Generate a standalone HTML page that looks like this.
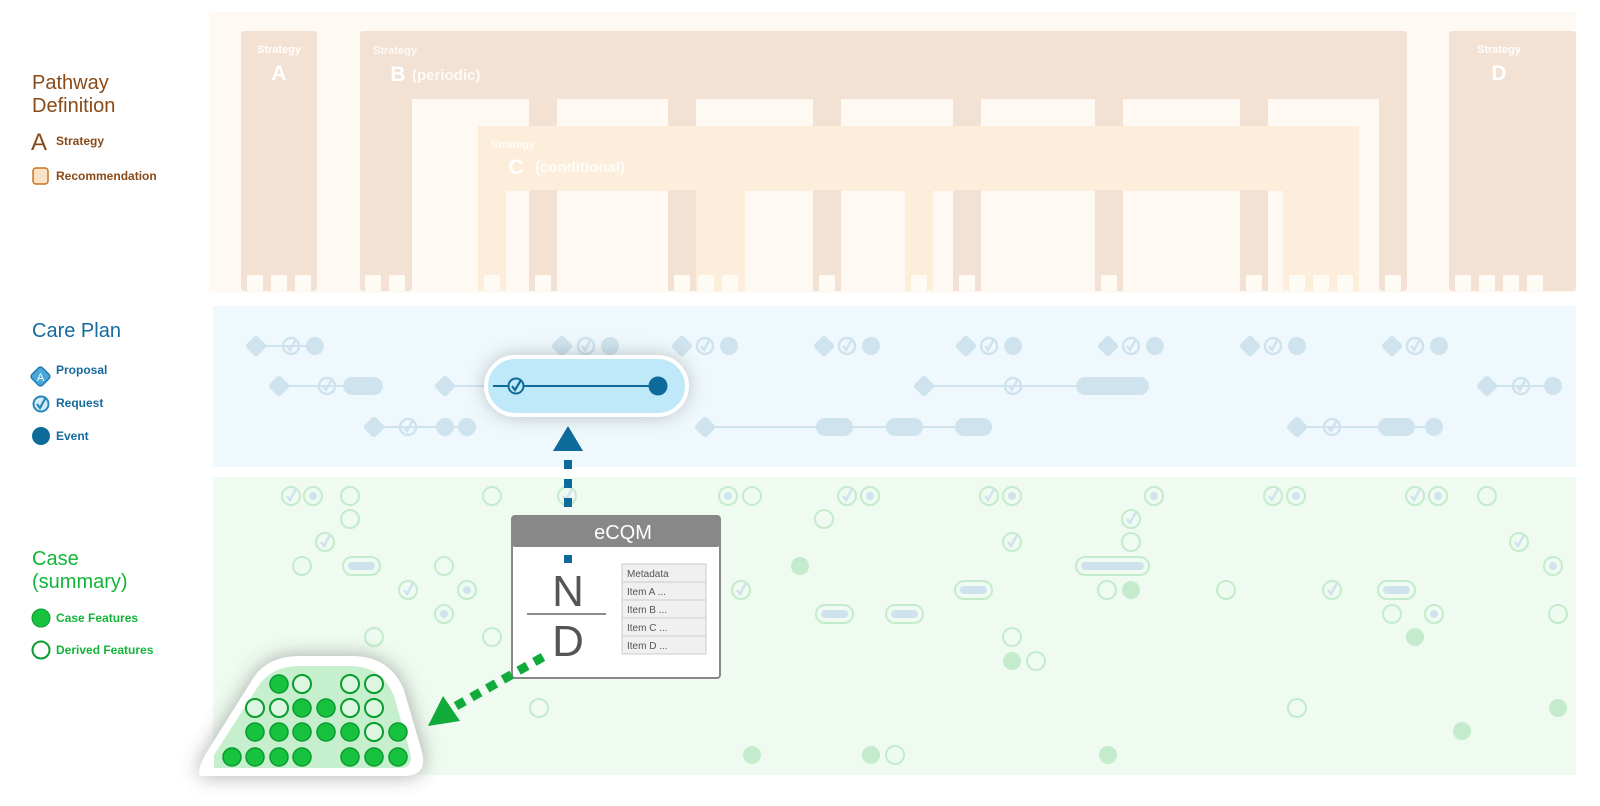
<!DOCTYPE html>
<html><head><meta charset="utf-8"><style>
html,body{margin:0;padding:0;background:#fff;}
svg{display:block;font-family:"Liberation Sans",sans-serif;}
</style></head><body>
<svg width="1600" height="806" viewBox="0 0 1600 806" xmlns="http://www.w3.org/2000/svg">
<defs>
<filter id="sh" x="-30%" y="-60%" width="160%" height="220%"><feGaussianBlur stdDeviation="10"/></filter>
<g id="dia"><rect x="-8" y="-8" width="16" height="16" rx="3" transform="rotate(45)" fill="#cfe3ee"/></g>
<g id="chk"><circle r="8" fill="none" stroke="#cfe3ee" stroke-width="2.5"/><path d="M-4 0 L-1 4 L5 -7" fill="none" stroke="#cfe3ee" stroke-width="2.5"/></g>
<g id="dot"><circle r="9" fill="#cfe3ee"/></g>
<g id="go"><circle r="9" fill="none" stroke="#c4ebcc" stroke-width="2"/></g>
<g id="gf"><circle r="9" fill="#c4ebcc"/></g>
<g id="gd"><circle r="9" fill="none" stroke="#c4ebcc" stroke-width="2"/><circle r="4" fill="#cfe3ee"/></g>
<g id="gc"><circle r="9" fill="none" stroke="#c4ebcc" stroke-width="2"/><path d="M-4 0 L-1 4 L5 -7" fill="none" stroke="#cfe3ee" stroke-width="2.5"/></g>
<g id="wb"><rect x="-8" y="-8" width="16" height="16" rx="2" fill="#fefaf4"/></g>
<g id="F"><circle r="9" fill="#17c23f" stroke="#0b9b2f" stroke-width="1.5"/></g>
<g id="O"><circle r="9" fill="#dcf6e1" stroke="#0b9b2f" stroke-width="2"/></g>
</defs>

<!-- Legend -->
<g fill="#8a4a17">
<text x="32" y="89" font-size="20">Pathway</text>
<text x="32" y="112" font-size="20">Definition</text>
<text x="31" y="150" font-size="24">A</text>
<text x="56" y="145" font-size="12" font-weight="bold">Strategy</text>
<rect x="33" y="168" width="15" height="16" rx="3" fill="#fde2c4" stroke="#c8742a" stroke-width="1.5"/>
<text x="56" y="180" font-size="12" font-weight="bold">Recommendation</text>
</g>
<g fill="#146b9c">
<text x="32" y="337" font-size="20">Care Plan</text>
<rect x="33" y="369" width="15" height="15" rx="3" transform="rotate(45 40.5 376.5)" fill="#4aa7d6" stroke="#1f7bb0" stroke-width="1.5"/>
<text x="40.5" y="381" font-size="11" fill="#fff" text-anchor="middle">A</text>
<text x="56" y="374" font-size="12" font-weight="bold">Proposal</text>
<circle cx="41" cy="404" r="7.5" fill="#d4ecf7" stroke="#2a87bb" stroke-width="2"/><path d="M37 404 L40 408 L46 397" fill="none" stroke="#2a87bb" stroke-width="2.2"/>
<text x="56" y="407" font-size="12" font-weight="bold">Request</text>
<circle cx="41" cy="436" r="9" fill="#0e6a9a"/>
<text x="56" y="440" font-size="12" font-weight="bold">Event</text>
</g>
<g fill="#12b53a">
<text x="32" y="565" font-size="20">Case</text>
<text x="32" y="588" font-size="20">(summary)</text>
<circle cx="41" cy="618" r="9" fill="#17c23f" stroke="#0b9b2f"/>
<text x="56" y="622" font-size="12" font-weight="bold">Case Features</text>
<circle cx="41" cy="650" r="8.5" fill="#fff" stroke="#0b9b2f" stroke-width="2"/>
<text x="56" y="654" font-size="12" font-weight="bold">Derived Features</text>
</g>

<!-- Pathway band -->
<rect x="209" y="12" width="1367" height="281" fill="#fefaf3"/>
<g fill="#f3e1d4">
<rect x="241" y="31" width="76" height="260" rx="3"/>
<rect x="360" y="31" width="1047" height="68" rx="3"/>
<rect x="360" y="31" width="52" height="260" rx="3"/>
<rect x="529" y="90" width="28" height="201" rx="3"/>
<rect x="668" y="90" width="28" height="201" rx="3"/>
<rect x="813" y="90" width="28" height="201" rx="3"/>
<rect x="953" y="90" width="28" height="201" rx="3"/>
<rect x="1095" y="90" width="28" height="201" rx="3"/>
<rect x="1240" y="90" width="28" height="201" rx="3"/>
<rect x="1379" y="90" width="28" height="201" rx="3"/>
<rect x="1449" y="31" width="127" height="260" rx="3"/>
</g>
<g fill="#fdeedb">
<rect x="478" y="126" width="881" height="65"/>
<rect x="478" y="126" width="28" height="165"/>
<rect x="696" y="126" width="49" height="165"/>
<rect x="905" y="126" width="28" height="165"/>
<rect x="1283" y="126" width="76" height="165"/>
</g>
<g fill="#f3e1d4">
<rect x="529" y="190" width="28" height="101"/><rect x="668" y="190" width="28" height="101"/><rect x="813" y="190" width="28" height="101"/><rect x="953" y="190" width="28" height="101"/><rect x="1095" y="190" width="28" height="101"/><rect x="1240" y="190" width="28" height="101"/>
</g>
<g fill="#fff" text-anchor="middle" font-weight="bold">
<text x="279" y="53" font-size="11">Strategy</text><text x="279" y="80" font-size="21">A</text>
<text x="1499" y="53" font-size="11">Strategy</text><text x="1499" y="80" font-size="21">D</text>
<text x="398" y="81" font-size="21">B</text>
<text x="516" y="174" font-size="21">C</text>
</g>
<g fill="#fff" opacity="0.85" font-weight="bold">
<text x="373" y="54" font-size="11">Strategy</text><text x="412" y="80" font-size="15">(periodic)</text>
<text x="491" y="148" font-size="11">Strategy</text><text x="535" y="172" font-size="15">(conditional)</text>
</g>
<g>
<use href="#wb" x="255" y="283"/><use href="#wb" x="279" y="283"/><use href="#wb" x="303" y="283"/>
<use href="#wb" x="373" y="283"/><use href="#wb" x="397" y="283"/>
<use href="#wb" x="492" y="283"/><use href="#wb" x="543" y="283"/>
<use href="#wb" x="682" y="283"/><use href="#wb" x="706" y="283"/><use href="#wb" x="730" y="283"/>
<use href="#wb" x="827" y="283"/><use href="#wb" x="919" y="283"/><use href="#wb" x="967" y="283"/>
<use href="#wb" x="1109" y="283"/><use href="#wb" x="1254" y="283"/>
<use href="#wb" x="1297" y="283"/><use href="#wb" x="1321" y="283"/><use href="#wb" x="1345" y="283"/>
<use href="#wb" x="1393" y="283"/>
<use href="#wb" x="1463" y="283"/><use href="#wb" x="1487" y="283"/><use href="#wb" x="1511" y="283"/><use href="#wb" x="1535" y="283"/>
</g>

<!-- Care plan band -->
<rect x="213" y="306" width="1363" height="161" fill="#eff9fd"/>
<g stroke="#cfe3ee" stroke-width="2">
<line x1="280" y1="386" x2="350" y2="386"/><line x1="445" y1="386" x2="500" y2="386"/>
<line x1="924" y1="386" x2="1100" y2="386"/><line x1="1487" y1="386" x2="1553" y2="386"/>
<line x1="374" y1="427" x2="467" y2="427"/><line x1="705" y1="427" x2="975" y2="427"/><line x1="1297" y1="427" x2="1432" y2="427"/>
<line x1="256" y1="346" x2="315" y2="346"/>
</g>
<g>
<use href="#dia" x="256" y="346"/><use href="#chk" x="291" y="346"/><use href="#dot" x="315" y="346"/>
<use href="#dia" x="562" y="346"/><use href="#chk" x="586" y="346"/><use href="#dot" x="610" y="346"/>
<use href="#dia" x="682" y="346"/><use href="#chk" x="705" y="346"/><use href="#dot" x="729" y="346"/>
<use href="#dia" x="824" y="346"/><use href="#chk" x="847" y="346"/><use href="#dot" x="871" y="346"/>
<use href="#dia" x="966" y="346"/><use href="#chk" x="989" y="346"/><use href="#dot" x="1013" y="346"/>
<use href="#dia" x="1108" y="346"/><use href="#chk" x="1131" y="346"/><use href="#dot" x="1155" y="346"/>
<use href="#dia" x="1250" y="346"/><use href="#chk" x="1273" y="346"/><use href="#dot" x="1297" y="346"/>
<use href="#dia" x="1392" y="346"/><use href="#chk" x="1415" y="346"/><use href="#dot" x="1439" y="346"/>
<use href="#dia" x="279" y="386"/><use href="#chk" x="327" y="386"/><rect x="343" y="377" width="40" height="18" rx="9" fill="#cfe3ee"/>
<use href="#dia" x="445" y="386"/>
<use href="#dia" x="924" y="386"/><use href="#chk" x="1013" y="386"/><rect x="1076" y="377" width="73" height="18" rx="9" fill="#cfe3ee"/>
<use href="#dia" x="1487" y="386"/><use href="#chk" x="1521" y="386"/><use href="#dot" x="1553" y="386"/>
<use href="#dia" x="374" y="427"/><use href="#chk" x="408" y="427"/><use href="#dot" x="445" y="427"/><use href="#dot" x="467" y="427"/>
<use href="#dia" x="705" y="427"/><rect x="816" y="418" width="37" height="18" rx="9" fill="#cfe3ee"/><rect x="886" y="418" width="37" height="18" rx="9" fill="#cfe3ee"/><rect x="955" y="418" width="37" height="18" rx="9" fill="#cfe3ee"/>
<use href="#dia" x="1297" y="427"/><use href="#chk" x="1332" y="427"/><rect x="1378" y="418" width="37" height="18" rx="9" fill="#cfe3ee"/><use href="#dot" x="1434" y="427"/>
</g>

<!-- Case band -->
<rect x="213" y="477" width="1363" height="298" fill="#effbf1"/>
<g>
<use href="#gc" x="291" y="496"/><use href="#gd" x="313" y="496"/><use href="#go" x="350" y="496"/><use href="#go" x="492" y="496"/><use href="#gc" x="567" y="496"/><use href="#gd" x="728" y="496"/><use href="#go" x="752" y="496"/><use href="#gc" x="847" y="496"/><use href="#gd" x="870" y="496"/><use href="#gc" x="989" y="496"/><use href="#gd" x="1012" y="496"/><use href="#gd" x="1154" y="496"/><use href="#gc" x="1273" y="496"/><use href="#gd" x="1296" y="496"/><use href="#gc" x="1415" y="496"/><use href="#gd" x="1438" y="496"/><use href="#go" x="1487" y="496"/>
<use href="#go" x="350" y="519"/><use href="#go" x="824" y="519"/><use href="#gc" x="1131" y="519"/>
<use href="#gc" x="325" y="542"/><use href="#gc" x="1012" y="542"/><use href="#go" x="1131" y="542"/><use href="#gc" x="1519" y="542"/>
<use href="#go" x="302" y="566"/><rect x="343" y="557" width="37" height="18" rx="9" fill="none" stroke="#c4ebcc" stroke-width="2"/><rect x="348" y="562" width="27" height="8" rx="4" fill="#cfe3ee"/><use href="#go" x="444" y="566"/><use href="#gf" x="800" y="566"/><rect x="1076" y="557" width="73" height="18" rx="9" fill="none" stroke="#c4ebcc" stroke-width="2"/><rect x="1081" y="562" width="63" height="8" rx="4" fill="#cfe3ee"/><use href="#gd" x="1553" y="566"/>
<use href="#gc" x="408" y="590"/><use href="#gd" x="467" y="590"/><use href="#gc" x="741" y="590"/><rect x="955" y="581" width="37" height="18" rx="9" fill="none" stroke="#c4ebcc" stroke-width="2"/><rect x="960" y="586" width="27" height="8" rx="4" fill="#cfe3ee"/><use href="#go" x="1107" y="590"/><use href="#gf" x="1131" y="590"/><use href="#go" x="1226" y="590"/><use href="#gc" x="1332" y="590"/><rect x="1378" y="581" width="37" height="18" rx="9" fill="none" stroke="#c4ebcc" stroke-width="2"/><rect x="1383" y="586" width="27" height="8" rx="4" fill="#cfe3ee"/>
<use href="#gd" x="444" y="614"/><rect x="816" y="605" width="37" height="18" rx="9" fill="none" stroke="#c4ebcc" stroke-width="2"/><rect x="821" y="610" width="27" height="8" rx="4" fill="#cfe3ee"/><rect x="886" y="605" width="37" height="18" rx="9" fill="none" stroke="#c4ebcc" stroke-width="2"/><rect x="891" y="610" width="27" height="8" rx="4" fill="#cfe3ee"/><use href="#go" x="1392" y="614"/><use href="#gd" x="1434" y="614"/><use href="#go" x="1558" y="614"/>
<use href="#go" x="374" y="637"/><use href="#go" x="492" y="637"/><use href="#go" x="1012" y="637"/><use href="#gf" x="1415" y="637"/>
<use href="#gf" x="1012" y="661"/><use href="#go" x="1036" y="661"/>
<use href="#go" x="539" y="708"/><use href="#go" x="1297" y="708"/><use href="#gf" x="1558" y="708"/>
<use href="#gf" x="1462" y="731"/>
<use href="#gf" x="752" y="755"/><use href="#gf" x="871" y="755"/><use href="#go" x="895" y="755"/><use href="#gf" x="1108" y="755"/>
</g>

<!-- Highlight care plan pill -->
<rect x="486" y="357" width="201" height="58" rx="29" fill="#333" opacity="0.35" filter="url(#sh)"/>
<rect x="486" y="357" width="201" height="58" rx="29" fill="#bfe9f8" stroke="#fff" stroke-width="4"/>
<line x1="493" y1="386" x2="658" y2="386" stroke="#0e6a9a" stroke-width="2"/>
<circle cx="516" cy="386" r="7.5" fill="#bfe9f8" stroke="#0e6a9a" stroke-width="2"/><path d="M512 386 L515 390 L521 380" fill="none" stroke="#0e6a9a" stroke-width="2.2"/>
<circle cx="658" cy="386" r="9.5" fill="#0e6a9a"/>

<!-- Blue arrow -->
<polygon points="568,426 553,451 583,451" fill="#0e6a9a"/>
<line x1="568" y1="460" x2="568" y2="560" stroke="#0e6a9a" stroke-width="8" stroke-dasharray="9,10"/>

<!-- eCQM -->
<rect x="512" y="516" width="208" height="162" rx="3" fill="#fff" stroke="#888" stroke-width="2"/>
<rect x="512" y="516" width="208" height="31" rx="3" fill="#888"/>
<text x="623" y="539" font-size="20" fill="#fff" text-anchor="middle">eCQM</text>
<line x1="568" y1="555" x2="568" y2="563" stroke="#0e6a9a" stroke-width="8"/>
<text x="568" y="606" font-size="44" fill="#555" text-anchor="middle">N</text>
<line x1="527" y1="614" x2="606" y2="614" stroke="#666" stroke-width="1.5"/>
<text x="568" y="656" font-size="44" fill="#555" text-anchor="middle">D</text>
<g font-size="10" fill="#555">
<rect x="622" y="564" width="84" height="90" fill="#f0f0f0" stroke="#ccc"/>
<line x1="622" y1="582" x2="706" y2="582" stroke="#ccc"/><line x1="622" y1="600" x2="706" y2="600" stroke="#ccc"/><line x1="622" y1="618" x2="706" y2="618" stroke="#ccc"/><line x1="622" y1="636" x2="706" y2="636" stroke="#ccc"/>
<text x="627" y="577">Metadata</text><text x="627" y="595">Item A ...</text><text x="627" y="613">Item B ...</text><text x="627" y="631">Item C ...</text><text x="627" y="649">Item D ...</text>
</g>

<!-- Green arrow -->
<line x1="543" y1="657" x2="456" y2="706" stroke="#10ab3a" stroke-width="9" stroke-dasharray="10,8"/>
<polygon points="428,726 443,696 460,721" fill="#10ab3a"/>

<!-- Green blob -->
<path d="M200 776 Q197 770 205 755 L252 680 Q266 656 300 656 L352 656 Q390 656 404 690 L422 752 Q428 776 404 776 Z" fill="#333" opacity="0.4" filter="url(#sh)"/>
<path d="M200 776 Q197 770 205 755 L252 680 Q266 656 300 656 L352 656 Q390 656 404 690 L422 752 Q428 776 404 776 Z" fill="#fff"/>
<path d="M214 768 L214 755 L257 688 Q270 666 300 666 L350 666 Q382 666 394 696 L410 752 Q414 768 400 768 Z" fill="#c5efcd"/>
<g>
<use href="#F" x="279" y="684"/><use href="#O" x="302" y="684"/><use href="#O" x="350" y="684"/><use href="#O" x="374" y="684"/>
<use href="#O" x="255" y="708"/><use href="#O" x="279" y="708"/><use href="#F" x="302" y="708"/><use href="#F" x="326" y="708"/><use href="#O" x="350" y="708"/><use href="#O" x="374" y="708"/>
<use href="#F" x="255" y="732"/><use href="#F" x="279" y="732"/><use href="#F" x="302" y="732"/><use href="#F" x="326" y="732"/><use href="#F" x="350" y="732"/><use href="#O" x="374" y="732"/><use href="#F" x="398" y="732"/>
<use href="#F" x="232" y="757"/><use href="#F" x="255" y="757"/><use href="#F" x="279" y="757"/><use href="#F" x="302" y="757"/><use href="#F" x="350" y="757"/><use href="#F" x="374" y="757"/><use href="#F" x="398" y="757"/>
</g>
</svg>
</body></html>
